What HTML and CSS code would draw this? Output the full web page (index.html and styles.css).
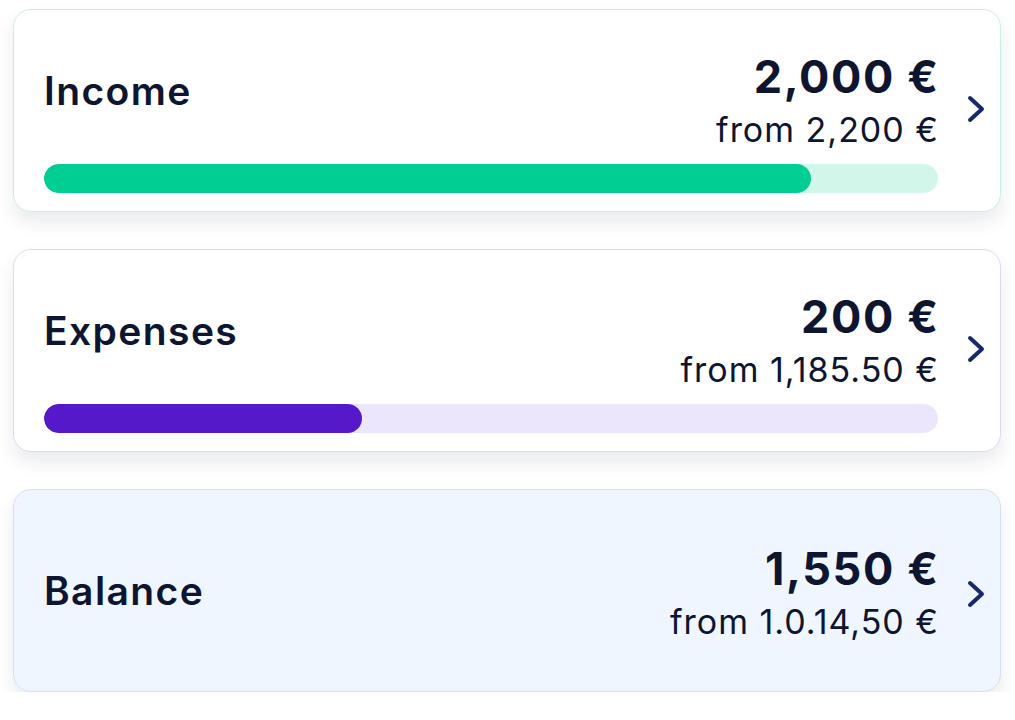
FILE: index.html
```html
<!DOCTYPE html>
<html lang="en">
<head>
    <meta charset="UTF-8">
    <meta name="viewport" content="width=device-width, initial-scale=1.0">
    <title>Budget Summary</title>
    <link rel="stylesheet" href="styles.css">
</head>
<body>
    <main class="summary">
        <!-- Income -->
        <a class="card card-income" href="#">
            <div class="card-body">
                <div class="card-top">
                    <h2 class="card-title">Income</h2>
                    <div class="amounts">
                        <div class="amount">2,000 €</div>
                        <div class="from">from 2,200 €</div>
                    </div>
                </div>
                <div class="bar"><div class="bar-fill" style="width: 85.8%"></div></div>
            </div>
            <svg class="chevron" viewBox="0 0 18 28" width="18" height="28">
                <path d="M3 3 L15 14 L3 25" />
            </svg>
        </a>

        <!-- Expenses -->
        <a class="card card-expenses" href="#">
            <div class="card-body">
                <div class="card-top">
                    <h2 class="card-title">Expenses</h2>
                    <div class="amounts">
                        <div class="amount">200 €</div>
                        <div class="from">from 1,185.50 €</div>
                    </div>
                </div>
                <div class="bar"><div class="bar-fill" style="width: 35.6%"></div></div>
            </div>
            <svg class="chevron" viewBox="0 0 18 28" width="18" height="28">
                <path d="M3 3 L15 14 L3 25" />
            </svg>
        </a>

        <!-- Balance -->
        <a class="card card-balance" href="#">
            <div class="card-body">
                <div class="card-top">
                    <h2 class="card-title">Balance</h2>
                    <div class="amounts">
                        <div class="amount">1,550 €</div>
                        <div class="from">from 1.0.14,50 €</div>
                    </div>
                </div>
            </div>
            <svg class="chevron" viewBox="0 0 18 28" width="18" height="28">
                <path d="M3 3 L15 14 L3 25" />
            </svg>
        </a>
    </main>
</body>
</html>
```

FILE: styles.css
```css
/* Page */
body {
    margin: 0;
    font-family: Inter, "Open Sans", sans-serif;
    color: #0d1531;
    background: #ffffff;
}

.summary {
    display: flex;
    flex-direction: column;
    gap: 37px;
    padding: 9px 0 0 13px;
    width: 988px;
}

/* Cards */
.card {
    display: flex;
    align-items: flex-end;
    height: 203px;
    box-sizing: border-box;
    padding: 0 15px 18px 30px;
    border: 1px solid #c9efe3;
    border-radius: 18px;
    background: #ffffff;
    box-shadow: 0 10px 18px rgba(20, 30, 60, 0.09);
    text-decoration: none;
    color: inherit;
}

.card-expenses {
    border-color: #e2d8f4;
}

.card-balance {
    align-items: center;
    padding-bottom: 0;
    padding-top: 6px;
    background-color: #f0f6ff;
    border-color: #d8e0ec;
}

.card-body {
    flex: 1;
    display: flex;
    flex-direction: column;
}

.card-top {
    display: flex;
    justify-content: space-between;
    align-items: flex-start;
}

.card-balance .card-top {
    align-items: center;
}

.card-title {
    margin: 14px 0 0;
    font-size: 39px;
    line-height: 48px;
    font-weight: 600;
    letter-spacing: 1.4px;
}

.card-balance .card-title {
    margin-top: -6px;
}

.amounts {
    text-align: right;
}

.amount {
    font-size: 45px;
    line-height: 48px;
    font-weight: 700;
    letter-spacing: 1.6px;
    margin-right: -1.6px;
}

.from {
    margin-top: 9px;
    margin-right: -1px;
    font-size: 34px;
    line-height: 40px;
    font-weight: 400;
    letter-spacing: 1px;
}

/* Progress bar */
.bar {
    margin-top: 14px;
    height: 29px;
    border-radius: 15px;
    background: #d3f6ea;
    overflow: hidden;
}

.bar-fill {
    height: 100%;
    border-radius: 15px;
    background: #00ce93;
}

.card-expenses .bar {
    background: #ece6fd;
}

.card-expenses .bar-fill {
    background: #5619c9;
}

/* Chevron */
.chevron {
    flex: none;
    align-self: center;
    margin-left: 29px;
    margin-top: 14px;
    fill: none;
    stroke: #16296b;
    stroke-width: 4;
    stroke-linecap: round;
    stroke-linejoin: round;
}

.card-balance .chevron {
    margin-top: 0;
}
```
